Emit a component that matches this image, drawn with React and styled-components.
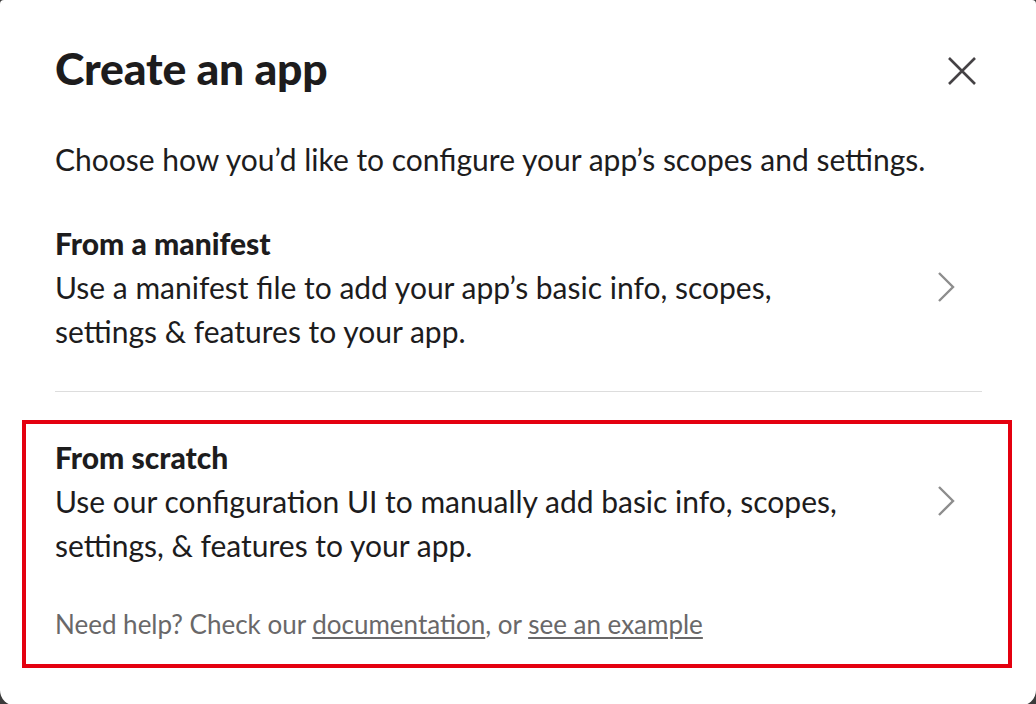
import React from 'react';
import styled, { createGlobalStyle } from 'styled-components';

const GlobalStyle = createGlobalStyle`
  html, body {
    margin: 0;
    padding: 0;
    background: #3b3b3b;
    overflow: hidden;
  }
  body {
    font-family: Lato, "Open Sans", sans-serif;
    color: #1d1c1d;
  }
`;

const Modal = styled.div`
  width: 1036px;
  height: 706px;
  box-sizing: border-box;
  background: #fff;
  border-radius: 4px 4px 16px 16px;
  padding: 38px 54px 0 55px;
  display: flex;
  flex-direction: column;
`;

const Header = styled.header`
  display: flex;
  align-items: center;
  justify-content: space-between;
  height: 60px;
`;

const Title = styled.h1`
  margin: 0;
  font-size: 44.5px;
  font-weight: 900;
  line-height: 60px;
  letter-spacing: -0.2px;
`;

const CloseButton = styled.button`
  width: 40px;
  height: 40px;
  margin-top: 6px;
  border: 0;
  padding: 0;
  background: none;
  display: flex;
  align-items: center;
  justify-content: center;
  cursor: pointer;
  color: #454245;
`;

const Intro = styled.p`
  margin: 39px 0 0;
  font-size: 30px;
  line-height: 44px;
`;

const OptionRow = styled.div`
  display: flex;
  align-items: center;
  justify-content: space-between;
  margin-top: ${p => p.$top || 0}px;
  padding-right: 27px;
  cursor: pointer;
`;

const OptionText = styled.div`
  max-width: 800px;
`;

const OptionTitle = styled.div`
  font-size: 30px;
  font-weight: 900;
  line-height: 44px;
`;

const OptionDesc = styled.div`
  font-size: 30px;
  line-height: 44px;
`;

const Chevron = styled.span`
  display: flex;
  color: #8d8d8d;
`;

const Divider = styled.hr`
  margin: 38px 0 0;
  border: 0;
  border-top: 1px solid #dddddd;
`;

const Highlight = styled.section`
  margin: 28px -30px 0 -33px;
  border: 4px solid #e4000f;
  padding: 11px 26px 20px 29px;
`;

const Help = styled.p`
  margin: 37px 0 0;
  font-size: 26px;
  line-height: 40px;
  color: #696869;
`;

const HelpLink = styled.a`
  color: inherit;
  text-decoration: underline;
  text-underline-offset: 3px;
  text-decoration-thickness: 2px;
`;

const CloseIcon = () => (
  <svg width="30" height="30" viewBox="0 0 30 30" fill="none">
    <path d="M2 2L28 28M28 2L2 28" stroke="currentColor" strokeWidth="2.6" />
  </svg>
);

const ChevronIcon = () => (
  <svg width="18" height="32" viewBox="0 0 18 32" fill="none">
    <path d="M2 2L16 16L2 30" stroke="currentColor" strokeWidth="2.4" />
  </svg>
);

const Option = ({ title, children, top }) => (
  <OptionRow $top={top}>
    <OptionText>
      <OptionTitle>{title}</OptionTitle>
      <OptionDesc>{children}</OptionDesc>
    </OptionText>
    <Chevron>
      <ChevronIcon />
    </Chevron>
  </OptionRow>
);

export default function App() {
  return (
    <>
      <GlobalStyle />
      <Modal>
        <Header>
          <Title>Create an app</Title>
          <CloseButton aria-label="Close">
            <CloseIcon />
          </CloseButton>
        </Header>
        <Intro>Choose how you’d like to configure your app’s scopes and settings.</Intro>
        <Option title="From a manifest" top={40}>
          Use a manifest file to add your app’s basic info, scopes, settings &amp; features to your app.
        </Option>
        <Divider />
        <Highlight>
          <Option title="From scratch">
            Use our configuration UI to manually add basic info, scopes, settings, &amp; features to your app.
          </Option>
          <Help>
            Need help? Check our <HelpLink href="#">documentation</HelpLink>, or <HelpLink href="#">see an example</HelpLink>
          </Help>
        </Highlight>
      </Modal>
    </>
  );
}
